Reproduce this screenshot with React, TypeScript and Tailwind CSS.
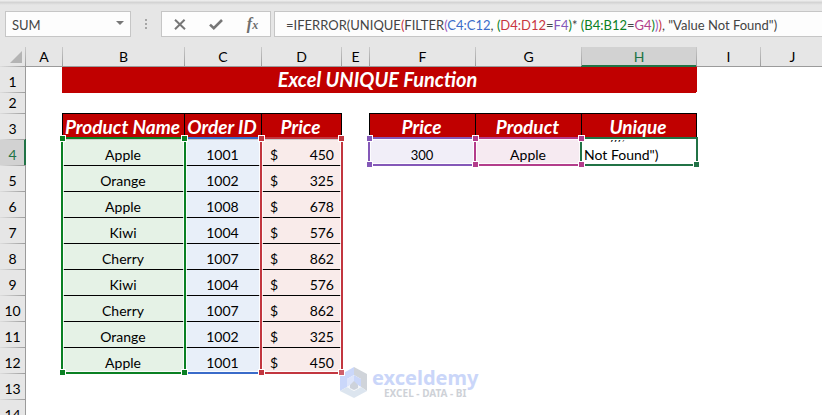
import React from "react";
import clsx from "clsx";

type Column = { name: string; width: string };

const columns: Column[] = [
  { name: "A", width: "w-[37px]" },
  { name: "B", width: "w-[122px]" },
  { name: "C", width: "w-[77px]" },
  { name: "D", width: "w-[80px]" },
  { name: "E", width: "w-[28px]" },
  { name: "F", width: "w-[106px]" },
  { name: "G", width: "w-[106px]" },
  { name: "H", width: "w-[115px]" },
  { name: "I", width: "w-[64px]" },
  { name: "J", width: "w-auto" },
];

const orders = [
  { product: "Apple", id: 1001, price: 450 },
  { product: "Orange", id: 1002, price: 325 },
  { product: "Apple", id: 1008, price: 678 },
  { product: "Kiwi", id: 1004, price: 576 },
  { product: "Cherry", id: 1007, price: 862 },
  { product: "Kiwi", id: 1004, price: 576 },
  { product: "Cherry", id: 1007, price: 862 },
  { product: "Orange", id: 1002, price: 325 },
  { product: "Apple", id: 1001, price: 450 },
];

const formula = [
  { text: "=IFERROR(UNIQUE", color: "text-[#444444]" },
  { text: "(", color: "text-[#c8353f]" },
  { text: "FILTER", color: "text-[#444444]" },
  { text: "(", color: "text-[#9a5cc0]" },
  { text: "C4:C12", color: "text-[#3a6bc9]" },
  { text: ", ", color: "text-[#444444]" },
  { text: "(", color: "text-[#0a8023]" },
  { text: "D4:D12", color: "text-[#c8353f]" },
  { text: "=", color: "text-[#444444]" },
  { text: "F4", color: "text-[#8458b8]" },
  { text: ")", color: "text-[#0a8023]" },
  { text: "* ", color: "text-[#444444]" },
  { text: "(B4:B12", color: "text-[#0a8023]" },
  { text: "=", color: "text-[#444444]" },
  { text: "G4", color: "text-[#b33d8b]" },
  { text: ")", color: "text-[#0a8023]" },
  { text: ")", color: "text-[#9a5cc0]" },
  { text: ")", color: "text-[#c8353f]" },
  { text: ', "Value Not Found")', color: "text-[#444444]" },
];

const headCell =
  "border-l border-t border-black bg-[#c00000] p-0 pr-[2px] align-bottom text-center text-[19px] leading-[24px] font-bold italic text-white whitespace-nowrap";
const bodyCell = "border-t p-0 align-bottom text-center leading-[20px]";

function RowHeader({ row, active }: { row: number; active?: boolean }) {
  return (
    <th
      scope="row"
      className={clsx(
        "border-t p-0 align-bottom font-normal leading-[20px] [border-image:linear-gradient(to_right,#e0e0e0,#9b9b9b)_1]",
        active
          ? "bg-[#d2d2d2] text-[#217346] shadow-[1px_0_0_#217346,inset_-1px_0_0_#217346]"
          : "bg-[#e6e6e6] text-black",
      )}
    >
      {row}
    </th>
  );
}

function Gutter({ active }: { active?: boolean }) {
  return (
    <td className={clsx("border-l p-0", active ? "border-[#217346]" : "border-[#9b9b9b]")} />
  );
}

function Handle({ place, color }: { place: string; color: string }) {
  return (
    <span
      className={clsx("absolute z-10 size-[7px] border border-white", place, color)}
    />
  );
}

function RangeBox({ place, color }: { place: string; color: string }) {
  return (
    <div className={clsx("pointer-events-none absolute border-2", place, color)}>
      <div className="size-full border border-white/80" />
    </div>
  );
}

function FormulaBar() {
  return (
    <header className="shrink-0 bg-[#e6e6e6]">
      <div className="h-[5px] bg-linear-to-b from-[#f2f2f2] via-[#d4d4d4] to-[#e6e6e6]" />
      <div className="flex h-[42px] items-start pt-[6px] pl-[5px] text-[13px]">
        <div className="flex h-[26px] w-[126px] shrink-0 items-center border border-[#c6c6c6] bg-[#fdfdfd]">
          <input
            aria-label="Name box"
            defaultValue="SUM"
            className="h-full w-full min-w-0 bg-transparent pt-[2px] pl-[6px] text-[#444444] outline-none"
          />
          <button aria-label="Named ranges" className="mr-[6px] shrink-0">
            <svg className="mb-[3px]" width="8" height="4" viewBox="0 0 8 4" fill="#777777">
              <path d="M0 0h8L4 4z" />
            </svg>
          </button>
        </div>
        <div className="flex h-[26px] w-[30px] shrink-0 flex-col items-center justify-center gap-[2px]">
          <span className="size-[2px] bg-[#a6a6a6]" />
          <span className="size-[2px] bg-[#a6a6a6]" />
          <span className="size-[2px] bg-[#a6a6a6]" />
        </div>
        <div className="flex h-[26px] w-[110px] shrink-0 items-center justify-around border border-[#c6c6c6] bg-[#fdfdfd]">
          <button aria-label="Cancel">
            <svg width="12" height="11" viewBox="0 0 12 11" fill="none" stroke="#777777" strokeWidth="2">
              <path d="M1 .8 11 10.2M10.6 .8 1 10.2" />
            </svg>
          </button>
          <button aria-label="Enter">
            <svg width="14" height="11" viewBox="0 0 14 11" fill="none" stroke="#777777" strokeWidth="2.6">
              <path d="M1 5.6 4.8 9.2 13 1" />
            </svg>
          </button>
          <button
            aria-label="Insert function"
            className="flex items-baseline font-['Liberation_Serif',serif] text-[16px] leading-[18px] font-bold text-[#6e6e6e] italic"
          >
            f<span className="text-[12px]">x</span>
          </button>
        </div>
        <div
          role="textbox"
          aria-label="Formula"
          className="ml-[3px] h-[26px] min-w-0 flex-1 overflow-hidden border border-r-0 border-[#c6c6c6] bg-[#fdfdfd] pl-[11px] leading-[26px] whitespace-pre"
        >
          {formula.map((part, i) => (
            <span key={i} className={part.color}>
              {part.text}
            </span>
          ))}
        </div>
      </div>
    </header>
  );
}

function Watermark() {
  return (
    <div className="absolute top-[320px] left-[340px] flex items-center gap-[4px] opacity-90">
      <svg width="28" height="32" viewBox="0 0 28 32">
        <path d="M14 0 0 8v16l7-4v-8l7-4z" fill="#c5d3fa" />
        <path d="M14 0v8l7 4v8l6 4V7z" fill="#cbd0d6" />
        <path d="M0 24l14 7 13-7-6-4-7 4-7-4z" fill="#d9e3ee" />
        <path d="M7 12l7-4v8l-7 4z" fill="#dae3fb" />
        <path d="M14 8l7 4v8l-7-4z" fill="#c5d3fa" />
        <path d="M7 20l7-4 7 4-7 4z" fill="#f2f4f8" />
        <path d="M10 18l4-4 4 4v3l-4 2-4-2z" fill="#c8ced8" />
      </svg>
      <div className="text-center font-['Noto_Sans',sans-serif] font-bold">
        <div className="text-[20px] leading-[20px] text-[#c5d2f9]">exceldemy</div>
        <div className="text-[10px] leading-[10px] text-[#c9cdd3]">EXCEL - DATA - BI</div>
      </div>
    </div>
  );
}

function Sheet() {
  return (
    <main className="relative min-h-0 flex-1 overflow-hidden bg-white">
      <table className="w-full min-w-[824px] table-fixed border-separate border-spacing-0 text-[14px] text-black">
        <colgroup>
          <col className="w-[25px]" />
          {columns.map((c) => (
            <col key={c.name} className={c.width} />
          ))}
        </colgroup>
        <thead>
          <tr className="h-[19px]">
            <td className="bg-[#e6e6e6] p-0">
              <svg className="ml-auto mr-[3px]" width="12" height="12" viewBox="0 0 12 12" fill="#b4b4b4">
                <path d="M12 0v12H0z" />
              </svg>
            </td>
            {columns.map((c) => (
              <th
                key={c.name}
                scope="col"
                className={clsx(
                  "border-l p-0 font-normal leading-[19px] [border-image:linear-gradient(to_bottom,#cccccc,#9b9b9b)_1]",
                  c.name === "H"
                    ? "bg-[#d2d2d2] text-[#217346] shadow-[inset_0_-1px_0_#217346]"
                    : "bg-[#e6e6e6]",
                )}
              >
                {c.name}
              </th>
            ))}
          </tr>
        </thead>
        <tbody>
          <tr className="h-[26px]">
            <RowHeader row={1} />
            <td className="border-t border-l border-[#9b9b9b] p-0" />
            <td
              colSpan={6}
              className="border-t border-t-[#9b9b9b] bg-[#c00000] p-0 pl-[112px] text-center align-top text-[20px] leading-[25px] font-bold text-white italic"
            >
              Excel UNIQUE Function
            </td>
            <td className="border-t border-[#217346] bg-[#c00000] p-0" />
            <td className="border-t border-l border-t-[#9b9b9b] border-l-[#c00000] p-0" />
            <td className="border-t border-[#9b9b9b] p-0" />
          </tr>
          <tr className="h-[20px]">
            <RowHeader row={2} />
            <Gutter />
            <td colSpan={7} className="border-t border-[#c00000] p-0" />
            <td colSpan={2} className="p-0" />
          </tr>
          <tr className="h-[26px]">
            <RowHeader row={3} />
            <Gutter />
            <th scope="col" className={headCell}>Product Name</th>
            <th scope="col" className={headCell}>Order ID</th>
            <th scope="col" className={headCell}>Price</th>
            <td className="border-l border-black p-0" />
            <th scope="col" className={headCell}>Price</th>
            <th scope="col" className={headCell}>Product</th>
            <th scope="col" className={headCell}>Unique</th>
            <td className="border-l border-black p-0" />
            <td className="p-0" />
          </tr>
          {orders.map((order, i) => (
            <tr key={i} className="h-[26px]">
              <RowHeader row={i + 4} active={i === 0} />
              <Gutter active={i === 0} />
              <td className={clsx(bodyCell, "border-black bg-[#e5f2e6]")}>{order.product}</td>
              <td className={clsx(bodyCell, "border-black bg-[#e8eff9]")}>{order.id}</td>
              <td className={clsx(bodyCell, "border-black bg-[#f9ebea]")}>
                <div className="flex justify-between pr-[7px] pl-[9px]">
                  <span>$</span>
                  <span>{order.price}</span>
                </div>
              </td>
              <td className="p-0" />
              {i === 0 ? (
                <>
                  <td className="border-t border-transparent bg-[#f1eef8] p-0 text-center align-bottom text-[13px] leading-[20px]">
                    300
                  </td>
                  <td className={clsx(bodyCell, "border-transparent bg-[#f6eaf1]")}>Apple</td>
                  <td className={clsx(bodyCell, "border-transparent bg-white")}>
                    <div className="flex h-[25px] flex-col justify-end overflow-hidden">
                      <textarea
                        aria-label="Cell H4"
                        rows={2}
                        defaultValue={'=G4))), "Value\nNot Found")'}
                        className="block h-[40px] w-full shrink-0 resize-none overflow-hidden bg-white pl-[3px] leading-[20px] outline-none"
                      />
                    </div>
                  </td>
                </>
              ) : (
                <td colSpan={3} className="p-0" />
              )}
              <td colSpan={2} className="p-0" />
            </tr>
          ))}
          {[13, 14].map((row) => (
            <tr key={row} className="h-[26px]">
              <RowHeader row={row} />
              <Gutter />
              <td colSpan={9} className="p-0" />
            </tr>
          ))}
        </tbody>
      </table>

      <RangeBox place="left-[184px] top-[90px] h-[237px] w-[78px]" color="border-[#3a6bc9]" />
      <RangeBox place="left-[61px] top-[90px] h-[237px] w-[125px]" color="border-[#0a8023]" />
      <RangeBox place="left-[260px] top-[90px] h-[237px] w-[83px]" color="border-[#c2363f]" />
      <RangeBox place="left-[368px] top-[90px] h-[29px] w-[108px]" color="border-[#8458b8]" />
      <RangeBox place="left-[474px] top-[90px] h-[29px] w-[108px]" color="border-[#b33d8b]" />
      <RangeBox place="left-[580px] top-[90px] h-[29px] w-[118px]" color="border-[#217346]" />

      <Handle place="left-[59px] top-[88px]" color="bg-[#0a8023]" />
      <Handle place="left-[181px] top-[88px]" color="bg-[#0a8023]" />
      <Handle place="left-[59px] top-[322px]" color="bg-[#0a8023]" />
      <Handle place="left-[181px] top-[322px]" color="bg-[#0a8023]" />
      <Handle place="left-[258px] top-[88px]" color="bg-[#c2363f]" />
      <Handle place="left-[338px] top-[88px]" color="bg-[#c2363f]" />
      <Handle place="left-[258px] top-[322px]" color="bg-[#c2363f]" />
      <Handle place="left-[338px] top-[322px]" color="bg-[#d0606a]" />
      <Handle place="left-[366px] top-[88px]" color="bg-[#8458b8]" />
      <Handle place="left-[366px] top-[114px]" color="bg-[#8458b8]" />
      <Handle place="left-[472px] top-[88px]" color="bg-[#b33d8b]" />
      <Handle place="left-[472px] top-[114px]" color="bg-[#b33d8b]" />
      <Handle place="left-[578px] top-[88px]" color="bg-[#b33d8b]" />
      <Handle place="left-[578px] top-[114px]" color="bg-[#b33d8b]" />
      <Handle place="left-[693px] top-[114px]" color="bg-[#217346]" />

      <Watermark />
    </main>
  );
}

export default function App() {
  return (
    <div className="flex h-screen flex-col overflow-hidden font-[Lato,Carlito,sans-serif]">
      <FormulaBar />
      <Sheet />
    </div>
  );
}
